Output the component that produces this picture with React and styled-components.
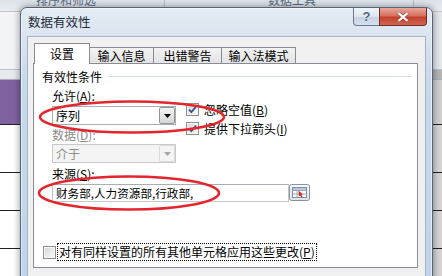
import React from "react";
import styled, { createGlobalStyle } from "styled-components";

const GlobalStyle = createGlobalStyle`
  html, body {
    margin: 0;
    padding: 0;
  }
  body {
    width: 442px;
    height: 276px;
    overflow: hidden;
    font-family: "Noto Sans CJK SC", "Liberation Sans", sans-serif;
    font-size: 12px;
    color: #000;
  }
`;

const Screen = styled.div`
  position: relative;
  width: 442px;
  height: 276px;
  overflow: hidden;
  background: #fff;
`;

/* ---- the Excel sheet behind the dialog ---- */

const Sheet = styled.div`
  display: flex;
  flex-direction: column;
  height: 100%;
`;

const RibbonStrip = styled.div`
  display: flex;
  height: 12px;
  flex-shrink: 0;
  box-sizing: border-box;
  overflow: hidden;
  background: linear-gradient(#dce2e9, #e8ecf1);
  border-bottom: 1px solid #c0c7d0;
`;

const RibbonGroup = styled.div`
  width: ${(p) => p.$w}px;
  flex-shrink: 0;
  box-sizing: border-box;
  padding-left: ${(p) => p.$pad}px;
  border-right: 1px solid #b7c0cb;
`;

const RibbonLabel = styled.div`
  margin-top: -6px;
  font-size: 12px;
  line-height: 12px;
  color: #5b6b7e;
  white-space: nowrap;
`;

const SheetRow = styled.div`
  display: flex;
  justify-content: space-between;
  height: ${(p) => p.$h}px;
  flex-shrink: 0;
  box-sizing: border-box;
  background: ${(p) => p.$bg};
  border-bottom: 1px solid ${(p) => p.$line};
`;

const EdgeCell = styled.div`
  width: 10px;
  background: ${(p) => p.$bg};
`;

/* ---- the dialog window ---- */

const Dialog = styled.div`
  position: absolute;
  left: 20px;
  top: 7px;
  width: 413px;
  height: 292px;
  box-sizing: border-box;
  display: flex;
  flex-direction: column;
  padding: 0 6px;
  border: 1px solid #56657a;
  border-radius: 7px 7px 0 0;
  background: linear-gradient(
    to bottom,
    #e4ebf4 0,
    #dae4f0 28px,
    #c9d9ec 70px,
    #bfd3eb 100%
  );
  box-shadow: 0 0 6px 1px rgba(0, 0, 0, 0.35),
    inset 0 0 0 1px rgba(255, 255, 255, 0.55);
`;

const TitleBar = styled.div`
  display: flex;
  align-items: flex-start;
  height: 28px;
  flex-shrink: 0;
`;

const TitleText = styled.div`
  padding-left: 1px;
  line-height: 28px;
  font-size: 12.5px;
  color: #1e2b3a;
`;

const CaptionButtons = styled.div`
  display: flex;
  margin-left: auto;
  margin-right: -1px;
`;

const HelpButton = styled.div`
  width: 27px;
  height: 18px;
  box-sizing: border-box;
  display: flex;
  align-items: center;
  justify-content: center;
  border: 1px solid #6c7a8d;
  border-top: none;
  border-radius: 0 0 0 4px;
  background: linear-gradient(
    to bottom,
    #eef3f8 0%,
    #dde6f0 50%,
    #c6d3e2 51%,
    #d4dfeb 100%
  );
  font-family: "Liberation Sans", sans-serif;
  font-weight: bold;
  font-size: 13px;
  color: #56647a;
  text-shadow: 0 0 1px #fff;
`;

const CloseButton = styled.div`
  width: 48px;
  height: 18px;
  margin-left: -1px;
  box-sizing: border-box;
  display: flex;
  align-items: center;
  justify-content: center;
  border: 1px solid #6e2c24;
  border-top: none;
  border-radius: 0 0 4px 0;
  background: linear-gradient(
    to bottom,
    #e8a79c 0%,
    #d7725f 45%,
    #c2412f 55%,
    #d0654f 100%
  );
`;

const Client = styled.div`
  flex: 1;
  display: flex;
  flex-direction: column;
  padding: 6px 7px 0 5px;
  background: #f0f0f0;
  border: 1px solid #a3b2c5;
`;

const TabRow = styled.div`
  position: relative;
  z-index: 1;
  display: flex;
  align-items: flex-end;
  height: 20px;
  padding-left: 1px;
`;

const Tab = styled.div`
  width: ${(p) => p.$w}px;
  height: ${(p) => (p.$active ? 21 : 16)}px;
  margin-left: ${(p) => (p.$first ? 0 : -1)}px;
  margin-bottom: ${(p) => (p.$active ? -1 : 0)}px;
  box-sizing: border-box;
  display: flex;
  align-items: center;
  justify-content: center;
  border: 1px solid #898c95;
  border-bottom: none;
  background: ${(p) =>
    p.$active ? "#fff" : "linear-gradient(#f3f3f3, #e3e3e3)"};
  font-size: 12px;
  line-height: 14px;
  white-space: nowrap;
`;

const Panel = styled.div`
  height: 205px;
  box-sizing: border-box;
  display: flex;
  flex-direction: column;
  padding: 5px 0 6px 8px;
  border: 1px solid #898c95;
  background: #fff;
`;

const GroupHeading = styled.div`
  display: flex;
  align-items: center;
  height: 16px;
  line-height: 16px;
`;

const Rule = styled.div`
  flex: 1;
  margin: 0 5px 0 6px;
  border-top: 1px solid #d5dfe5;
  border-bottom: 1px solid #fff;
`;

const GroupBody = styled.div`
  display: flex;
  flex-direction: column;
  padding-left: 10px;
`;

const FormRow = styled.div`
  display: flex;
  align-items: flex-start;
`;

const FieldColumn = styled.div`
  display: flex;
  flex-direction: column;
  width: 124px;
`;

const OptionColumn = styled.div`
  display: flex;
  flex-direction: column;
  margin: 15px 0 0 10px;
`;

const FieldLabel = styled.div`
  height: 16px;
  margin-top: ${(p) => p.$gap}px;
  line-height: 16px;
  white-space: nowrap;
  color: ${(p) => (p.$disabled ? "#8d8d8d" : "#000")};
`;

const Combo = styled.div`
  display: flex;
  height: 19px;
  margin-top: ${(p) => p.$gap}px;
  box-sizing: border-box;
  border: 1px solid ${(p) => (p.$disabled ? "#c6cacd" : "#abadb3")};
  background: ${(p) => (p.$disabled ? "#f4f4f4" : "#fff")};
  color: ${(p) => (p.$disabled ? "#8d8d8d" : "#000")};
`;

const ComboText = styled.div`
  flex: 1;
  padding-left: 3px;
  line-height: 17px;
`;

const DropButton = styled.div`
  width: 16px;
  box-sizing: border-box;
  display: flex;
  align-items: center;
  justify-content: center;
  border: 1px solid ${(p) => (p.$disabled ? "#dadada" : "#8f949a")};
  border-radius: 2px;
  background: ${(p) =>
    p.$disabled ? "#f4f4f4" : "linear-gradient(#f4f4f4, #d6d6d6)"};
`;

const CheckRow = styled.div`
  display: flex;
  align-items: center;
  height: 19px;
  white-space: nowrap;
`;

const CheckBox = styled.span`
  display: inline-flex;
  align-items: center;
  justify-content: center;
  width: 13px;
  height: 13px;
  flex-shrink: 0;
  box-sizing: border-box;
  margin-left: ${(p) => p.$indent || 0}px;
  border: 1px solid #8e8f8f;
  background: linear-gradient(135deg, #d3d3d3 0%, #efefef 65%, #fdfdfd 100%);
  box-shadow: inset 0 0 0 1px #f6f6f6;
`;

const CheckLabel = styled.span`
  margin-left: ${(p) => p.$gap}px;
  line-height: 16px;
  padding: 0 1px;
  border: 1px dotted ${(p) => (p.$focus ? "#000" : "transparent")};
`;

const SourceRow = styled.div`
  display: flex;
  align-items: flex-start;
  margin-top: 2px;
`;

const SourceInput = styled.div`
  width: 237px;
  height: 18px;
  box-sizing: border-box;
  padding-left: 3px;
  border: 1px solid #c4c8ce;
  border-top-color: #abadb3;
  line-height: 16px;
  font-size: 11.6px;
  white-space: nowrap;
`;

const RefButton = styled.div`
  display: flex;
  width: 21px;
  height: 17px;
`;

const ApplyRow = styled(CheckRow)`
  height: 18px;
  margin-top: auto;
`;

const Marks = styled.svg`
  position: absolute;
  left: 0;
  top: 0;
  width: 442px;
  height: 276px;
  pointer-events: none;
`;

const Arrow = ({ color }) => (
  <svg width="7" height="4" viewBox="0 0 7 4">
    <path d="M0 0 H7 L3.5 4 Z" fill={color} />
  </svg>
);

const Tick = () => (
  <svg width="9" height="9" viewBox="0 0 9 9">
    <path
      d="M1 4.6 L3.4 7 L8 1.6"
      fill="none"
      stroke="#3d5590"
      strokeWidth="1.9"
    />
  </svg>
);

const sheetRows = [
  { h: 58, bg: "#f2f4f7", edge: "#e4e6e9", line: "#bcc3cc" },
  { h: 10, bg: "#e6e9ee", edge: "#b4b4b4", line: "#a8afb8" },
  { h: 45, bg: "#7f63a1", edge: "#cfcfcf", line: "#202020" },
  { h: 48, bg: "#fff", edge: "#d4d4d4", line: "#202020" },
  { h: 38, bg: "#fff", edge: "#d4d4d4", line: "#202020" },
  { h: 38, bg: "#fff", edge: "#d4d4d4", line: "#202020" },
  { h: 40, bg: "#fff", edge: "#d4d4d4", line: "#202020" },
];

const tabs = [
  { label: "设置", w: 56, active: true },
  { label: "输入信息", w: 65 },
  { label: "出错警告", w: 69 },
  { label: "输入法模式", w: 75 },
];

const App = () => {
  return (
    <Screen>
      <GlobalStyle />
      <Sheet>
        <RibbonStrip>
          <RibbonGroup $w={165} $pad={36}>
            <RibbonLabel>排序和筛选</RibbonLabel>
          </RibbonGroup>
          <RibbonGroup $w={249} $pad={103}>
            <RibbonLabel>数据工具</RibbonLabel>
          </RibbonGroup>
        </RibbonStrip>
        {sheetRows.map((row, i) => (
          <SheetRow key={i} $h={row.h} $bg={row.bg} $line={row.line}>
            <span />
            <EdgeCell $bg={row.edge} />
          </SheetRow>
        ))}
      </Sheet>

      <Dialog>
        <TitleBar>
          <TitleText>数据有效性</TitleText>
          <CaptionButtons>
            <HelpButton>?</HelpButton>
            <CloseButton>
              <svg width="12" height="10" viewBox="0 0 12 10">
                <path
                  d="M1.5 1.2 L10.5 8.8 M10.5 1.2 L1.5 8.8"
                  stroke="#5b2019"
                  strokeWidth="3.6"
                  strokeOpacity="0.55"
                />
                <path
                  d="M1.5 1.2 L10.5 8.8 M10.5 1.2 L1.5 8.8"
                  stroke="#fff"
                  strokeWidth="2.2"
                />
              </svg>
            </CloseButton>
          </CaptionButtons>
        </TitleBar>

        <Client>
          <TabRow>
            {tabs.map((tab, i) => (
              <Tab key={tab.label} $w={tab.w} $active={tab.active} $first={i === 0}>
                {tab.label}
              </Tab>
            ))}
          </TabRow>

          <Panel>
            <GroupHeading>
              有效性条件
              <Rule />
            </GroupHeading>

            <GroupBody>
              <FormRow>
                <FieldColumn>
                  <FieldLabel $gap={3}>
                    允许(<u>A</u>):
                  </FieldLabel>
                  <Combo $gap={2}>
                    <ComboText>序列</ComboText>
                    <DropButton>
                      <Arrow color="#000" />
                    </DropButton>
                  </Combo>
                  <FieldLabel $gap={2} $disabled>
                    数据(<u>D</u>):
                  </FieldLabel>
                  <Combo $gap={1} $disabled>
                    <ComboText>介于</ComboText>
                    <DropButton $disabled>
                      <Arrow color="#a6a6a6" />
                    </DropButton>
                  </Combo>
                </FieldColumn>

                <OptionColumn>
                  <CheckRow>
                    <CheckBox>
                      <Tick />
                    </CheckBox>
                    <CheckLabel $gap={3}>
                      忽略空值(<u>B</u>)
                    </CheckLabel>
                  </CheckRow>
                  <CheckRow>
                    <CheckBox>
                      <Tick />
                    </CheckBox>
                    <CheckLabel $gap={3}>
                      提供下拉箭头(<u>I</u>)
                    </CheckLabel>
                  </CheckRow>
                </OptionColumn>
              </FormRow>

              <FieldLabel $gap={3}>
                来源(<u>S</u>):
              </FieldLabel>
              <SourceRow>
                <SourceInput>财务部,人力资源部,行政部,</SourceInput>
                <RefButton>
                  <svg width="21" height="17" viewBox="0 0 21 17">
                    <defs>
                      <linearGradient id="refbg" x1="0" y1="0" x2="0" y2="1">
                        <stop offset="0" stopColor="#f8f9fb" />
                        <stop offset="1" stopColor="#dde2e8" />
                      </linearGradient>
                    </defs>
                    <rect
                      x="0.5"
                      y="0.5"
                      width="20"
                      height="16"
                      rx="2"
                      fill="url(#refbg)"
                      stroke="#8a929c"
                    />
                    <rect x="3.5" y="3.5" width="14" height="10" fill="#fff" stroke="#7d8fa8" />
                    <path d="M3.5 6.5 H17.5 M3.5 10 H17.5 M8 3.5 V13.5" stroke="#9aaac0" />
                    <rect x="4" y="4" width="13" height="2" fill="#b9c6d8" />
                    <path d="M9.5 6.5 L14 10.5 L12.2 10.8 L13.6 12.8 L12.4 13.4 L11.1 11.5 L9.8 12.6 Z" fill="#d42a1f" />
                  </svg>
                </RefButton>
              </SourceRow>
            </GroupBody>

            <ApplyRow>
              <CheckBox $indent={1} />
              <CheckLabel $gap={1} $focus>
                对有同样设置的所有其他单元格应用这些更改(<u>P</u>)
              </CheckLabel>
            </ApplyRow>
          </Panel>
        </Client>
      </Dialog>

      <Marks viewBox="0 0 442 276">
        <ellipse
          cx="132"
          cy="117"
          rx="92"
          ry="15.5"
          fill="none"
          stroke="#e3262d"
          strokeWidth="2.6"
        />
        <ellipse
          cx="129"
          cy="193"
          rx="90"
          ry="16.5"
          fill="none"
          stroke="#e3262d"
          strokeWidth="2.6"
        />
      </Marks>
    </Screen>
  );
};

export default App;
